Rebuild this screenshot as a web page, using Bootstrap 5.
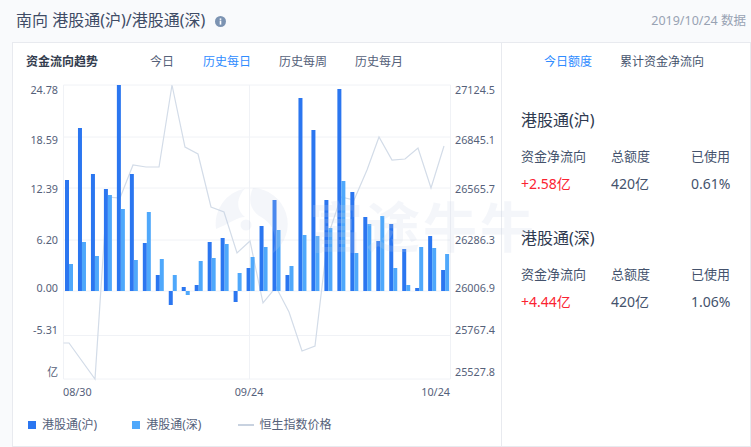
<!DOCTYPE html>
<html lang="zh-CN">
<head>
    <meta charset="UTF-8">
    <meta name="viewport" content="width=device-width, initial-scale=1.0">
    <title>南向资金</title>
    <link href="https://cdn.jsdelivr.net/npm/bootstrap@5.3.0/dist/css/bootstrap.min.css" rel="stylesheet">
    <style>
        html, body { height: 447px; overflow: hidden; }
        body { background: #f9fafc; color: #44526c; font-family: "Noto Sans", "Noto Sans CJK SC", sans-serif; font-size: 12px; }
        .page-head { height: 42px; padding: 0 5px 0 16px; }
        .page-title { font-size: 16px; color: #3f4c66; font-weight: 400; margin: 0; }
        .head-left { gap: 10px; }
        .info-dot { width: 11px; height: 11px; }
        .data-date { font-size: 12.5px; color: #98a2b3; }
        .panel-box { height: 405px; margin-left: 12px; background: #fff; border: 1px solid #e8eaef; }
        .chart-side { width: 488px; flex: none; }
        .quota-side { border-left: 1px solid #e8eaef; flex: 1; }
        .tab-row { height: 38px; padding-left: 13px; }
        .tab-title { font-weight: 700; color: #333c4e; width: 124px; font-size: 12px; }
        .tab-item { color: #55617a; width: 76px; }
        .tab-short { width: 53px; }
        .tab-on { color: #2f8cff; }
        .quota-tabs { height: 38px; padding-left: 42px; gap: 28px; }
        .quota-block { padding-left: 19px; }
        .block-one { margin-top: 29px; }
        .block-two { margin-top: 35px; }
        .quota-name { font-size: 16px; color: #2f3a50; margin: 0 0 17px; line-height: 20px; }
        .quota-cols { display: grid; grid-template-columns: 90px 80px 60px; row-gap: 10px; font-size: 13px; line-height: 18px; }
        .quota-val { font-size: 14px; }
        .quota-up { color: #fb2332; }
        .legend-row { padding-left: 15px; height: 24px; margin-top: 10px; gap: 35px; }
        .legend-item { gap: 6px; color: #55617a; }
        .legend-index { gap: 5px; margin-left: 2px; }
        .legend-sq { width: 8px; height: 8px; }
        .sq-dark { background: #2b76f0; }
        .sq-light { background: #4fa8fb; }
        .legend-line { width: 16px; height: 2px; background: #c8d2e0; }
        .chart-svg { display: block; }
        .axis-text { font-size: 10.8px; fill: #55617a; }
        .water-mark { left: 202px; top: 140px; z-index: 2; color: rgba(200,212,228,.2); font-size: 54px; font-weight: 700; line-height: 76px; letter-spacing: 3px; white-space: nowrap; gap: 20px; pointer-events: none; }
        .water-text { margin-top: 6px; }
        .water-logo { fill: rgba(200,212,228,.2); }
        .on-top { z-index: 1; }
    </style>
</head>
<body>
    <div class="page-head d-flex align-items-center justify-content-between">
        <div class="head-left d-flex align-items-center">
            <h1 class="page-title">南向 港股通(沪)/港股通(深)</h1>
            <svg class="info-dot" viewBox="0 0 11 11"><circle cx="5.5" cy="5.5" r="5.5" fill="#7c93b2"/><rect x="4.7" y="4.6" width="1.6" height="4" fill="#fff"/><rect x="4.7" y="2.4" width="1.6" height="1.5" fill="#fff"/></svg>
        </div>
        <span class="data-date">2019/10/24 数据</span>
    </div>

    <div class="panel-box d-flex position-relative">
        <div class="water-mark position-absolute d-flex align-items-center">
            <svg width="74" height="74" viewBox="0 0 74 74">
                <path class="water-logo" d="M1,42 A36,36 0 0 1 30,1.5 C22,10 20,22 30,30 C22,30 12,38 1,42 Z"/>
                <path class="water-logo" d="M38,1 A36,36 0 0 1 58,66 C62,50 60,38 46,30 C36,24 32,14 38,1 Z"/>
                <circle class="water-logo" cx="31" cy="38" r="5.5"/>
            </svg>
            <span class="water-text">富途牛牛</span>
        </div>

        <div class="chart-side position-relative on-top">
            <div class="tab-row d-flex align-items-center">
                <span class="tab-title">资金流向趋势</span>
                <span class="tab-item tab-short">今日</span>
                <span class="tab-item tab-on">历史每日</span>
                <span class="tab-item">历史每周</span>
                <span class="tab-item">历史每月</span>
            </div>
            <svg id="chart" class="chart-svg" width="488" height="322"></svg>
            <div class="legend-row d-flex align-items-center">
                <span class="legend-item d-flex align-items-center"><i class="legend-sq sq-dark"></i>港股通(沪)</span>
                <span class="legend-item d-flex align-items-center"><i class="legend-sq sq-light"></i>港股通(深)</span>
                <span class="legend-item legend-index d-flex align-items-center"><i class="legend-line"></i>恒生指数价格</span>
            </div>
        </div>

        <div class="quota-side position-relative on-top">
            <div class="quota-tabs d-flex align-items-center">
                <span class="tab-on">今日额度</span>
                <span>累计资金净流向</span>
            </div>
            <div class="quota-block block-one">
                <p class="quota-name">港股通(沪)</p>
                <div class="quota-cols">
                    <span>资金净流向</span><span>总额度</span><span>已使用</span>
                    <span class="quota-val quota-up">+2.58亿</span><span class="quota-val">420亿</span><span class="quota-val">0.61%</span>
                </div>
            </div>
            <div class="quota-block block-two">
                <p class="quota-name">港股通(深)</p>
                <div class="quota-cols">
                    <span>资金净流向</span><span>总额度</span><span>已使用</span>
                    <span class="quota-val quota-up">+4.44亿</span><span class="quota-val">420亿</span><span class="quota-val">1.06%</span>
                </div>
            </div>
        </div>
    </div>

    <script>
        // pixel tops read off the chart, page coordinates
        const baseY = 291;
        const dark = [180,128,174,189,85,174,243,275,305,287,285,242,238,302,268,226,200,275,98,130,200,89,192,217,241,224,249,288,236,270];
        const light = [264,242,256,195,209,260,212,259,275,295,261,258,244,273,257,247,230,266,235,236,228,181,253,224,216,268,285,247,248,254];
        const line = [[63.5,343],[69,343],[95,379],[107,197],[120,198],[133,165],[146,167],[159,167],[172,85],[185,147],[198,154],[211,207],[224,212],[237,253],[250,241],[263,303],[276,287],[289,312],[302,351],[315,346],[328,236],[341,197],[354,200],[367,170],[379,137],[392,160],[405,159],[418,148],[431,188],[444,146]];
        const left = ["24.78","18.59","12.39","6.20","0.00","-5.31","亿"];
        const right = ["27124.5","26845.1","26565.7","26286.3","26006.9","25767.4","25527.8"];
        const gridY = [85,137,188,240,291,335.5,379];
        const labelY = [90,140,189,240,288,330,372];
        const ox = 13, oy = 81; // panel-box + tab-row offset

        let s = "";
        gridY.forEach(y => { s += `<line x1="${63.5-ox}" x2="${450.5-ox}" y1="${y-oy}" y2="${y-oy}" stroke="#f0f2f6"/>`; });
        [63.5,249.5,450.5].forEach(x => { s += `<line x1="${x-ox}" x2="${x-ox}" y1="${85-oy}" y2="${379-oy}" stroke="#f0f2f6"/>`; });
        // index line sits under the bars
        s += `<polyline fill="none" stroke="#d3dce8" stroke-width="1.2" points="${line.map(p => (p[0]-ox)+","+(p[1]-oy)).join(" ")}"/>`;
        dark.forEach((top, i) => {
            const x = 65 + i * 12.97;
            s += `<rect x="${x-ox}" y="${Math.min(top,baseY)-oy}" width="4" height="${Math.abs(baseY-top)}" fill="#2b76f0"/>`;
            s += `<rect x="${x+4-ox}" y="${Math.min(light[i],baseY)-oy}" width="4" height="${Math.abs(baseY-light[i])}" fill="#4fa8fb"/>`;
        });
        left.forEach((t, i) => { s += `<text class="axis-text" x="${58-ox}" y="${labelY[i]+4-oy}" text-anchor="end">${t}</text>`; });
        right.forEach((t, i) => { s += `<text class="axis-text" x="${455-ox}" y="${labelY[i]+4-oy}">${t}</text>`; });
        s += `<text class="axis-text" x="${63-ox}" y="${396-oy}">08/30</text>`;
        s += `<text class="axis-text" x="${249-ox}" y="${396-oy}" text-anchor="middle">09/24</text>`;
        s += `<text class="axis-text" x="${450-ox}" y="${396-oy}" text-anchor="end">10/24</text>`;
        document.getElementById("chart").innerHTML = s;
    </script>
    <script src="https://cdn.jsdelivr.net/npm/bootstrap@5.3.0/dist/js/bootstrap.bundle.min.js"></script>
</body>
</html>
